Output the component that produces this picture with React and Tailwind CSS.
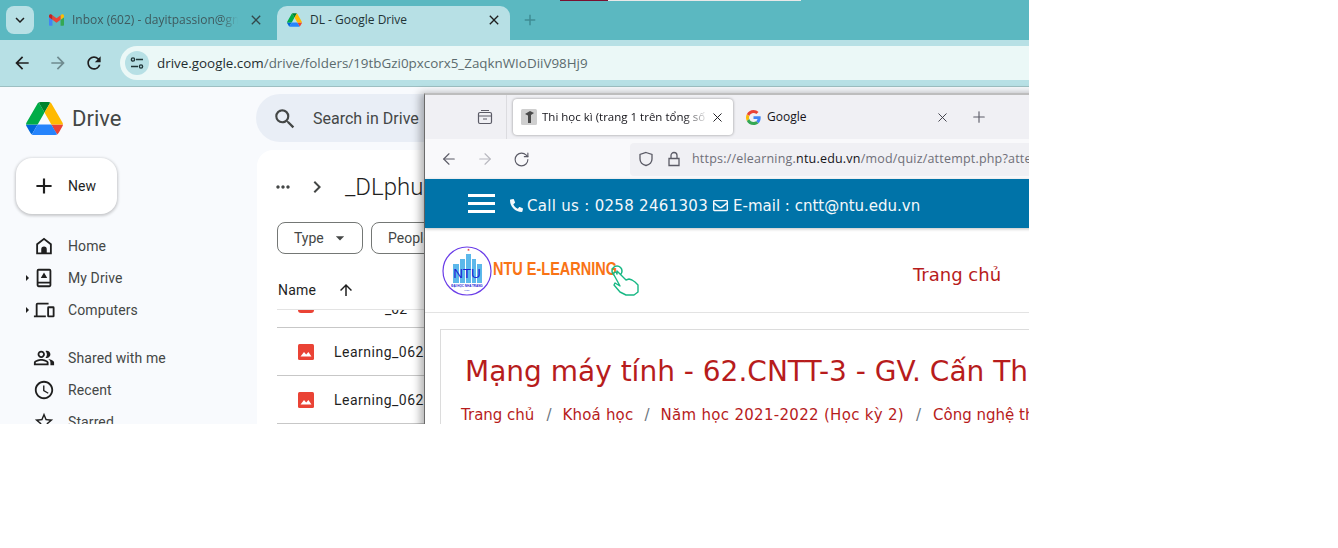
import { MdAdd, MdArrowUpward, MdArrowDropDown, MdChevronRight, MdMoreHoriz, MdOutlinePeopleAlt, MdOutlineAccessTime, MdOutlineStarBorder, MdSearch, MdArrowBack, MdArrowForward, MdRefresh, MdClose, MdExpandMore } from "react-icons/md";
import { FaPhone, FaRegEnvelope } from "react-icons/fa";
import { ArrowLeft, ArrowRight, RotateCw, X, Plus } from "lucide-react";

function DriveLogo({ className }) {
  return (
    <svg viewBox="0 0 87.3 78" className={className}>
      <path d="m6.6 66.85 3.85 6.65c.8 1.4 1.95 2.5 3.3 3.3l13.75-23.8h-27.5c0 1.55.4 3.1 1.2 4.5z" fill="#0066da" />
      <path d="m43.65 25-13.75-23.8c-1.35.8-2.5 1.9-3.3 3.3l-25.4 44a9.06 9.06 0 0 0 -1.2 4.5h27.5z" fill="#00ac47" />
      <path d="m73.55 76.8c1.35-.8 2.5-1.9 3.3-3.3l1.6-2.75 7.65-13.25c.8-1.4 1.2-2.95 1.2-4.5h-27.502l5.852 11.5z" fill="#ea4335" />
      <path d="m43.65 25 13.75-23.8c-1.35-.8-2.9-1.2-4.5-1.2h-18.5c-1.6 0-3.15.45-4.5 1.2z" fill="#00832d" />
      <path d="m59.8 53h-32.3l-13.75 23.8c1.35.8 2.9 1.2 4.5 1.2h50.8c1.6 0 3.15-.45 4.5-1.2z" fill="#2684fc" />
      <path d="m73.4 26.5-12.7-22c-.8-1.4-1.95-2.5-3.3-3.3l-13.75 23.8 16.15 28h27.45c0-1.55-.4-3.1-1.2-4.5z" fill="#ffba00" />
    </svg>
  );
}

function GmailIcon() {
  return (
    <svg viewBox="0 0 24 18" className="w-[15px] h-[12px] shrink-0">
      <path d="M1.6 18H5.5V8.5L0 4.4v12C0 17.3.7 18 1.6 18z" fill="#4285f4" />
      <path d="M18.5 18h3.9c.9 0 1.6-.7 1.6-1.6v-12l-5.5 4.1z" fill="#34a853" />
      <path d="M18.5 1.4v7.1L24 4.4V2.2C24 .2 21.7-1 20.1.2z" fill="#fbbc04" />
      <path d="M5.5 8.5V1.4L12 6.3l6.5-4.9v7.1L12 13.4z" fill="#ea4335" />
      <path d="M0 2.2v2.2l5.5 4.1V1.4L3.9.2C2.3-1 0 .2 0 2.2z" fill="#c5221f" />
    </svg>
  );
}

function GoogleIcon() {
  return (
    <svg viewBox="0 0 48 48" className="w-[15px] h-[15px] shrink-0">
      <path fill="#EA4335" d="M24 9.5c3.5 0 6.7 1.2 9.2 3.6l6.9-6.9C35.9 2.4 30.5 0 24 0 14.6 0 6.5 5.4 2.6 13.2l8 6.2C12.4 13.7 17.7 9.5 24 9.5z" />
      <path fill="#4285F4" d="M46.9 24.5c0-1.6-.1-3.1-.4-4.5H24v9h12.9c-.6 3-2.2 5.5-4.7 7.2l7.7 6c4.5-4.2 7-10.3 7-17.7z" />
      <path fill="#FBBC05" d="M10.5 28.6c-.5-1.4-.8-3-.8-4.6s.3-3.2.8-4.6l-8-6.2C.9 16.5 0 20.1 0 24s.9 7.5 2.6 10.8z" />
      <path fill="#34A853" d="M24 48c6.5 0 11.9-2.1 15.9-5.8l-7.7-6c-2.1 1.4-4.9 2.3-8.1 2.3-6.3 0-11.6-4.2-13.5-9.9l-8 6.2C6.5 42.6 14.6 48 24 48z" />
    </svg>
  );
}

function NavIcon({ d }) {
  return (
    <svg viewBox="0 0 24 24" className="w-[22px] h-[22px] fill-[#1f1f1f]">
      <path d={d} fillRule="evenodd" />
    </svg>
  );
}

function NavItem({ icon, label, arrow }) {
  return (
    <div className="relative flex items-center h-8 pl-[33px] gap-[13px] text-sm tracking-[0.1px] text-[#444746]">
      {arrow && <span className="absolute left-[26px] top-[13px] border-y-[3px] border-y-transparent border-l-[3px] border-l-[#1f1f1f]" />}
      <span className="w-[22px] flex justify-center text-[#1f1f1f]">{icon}</span>
      <span>{label}</span>
    </div>
  );
}

function FileRow({ className = "h-12", children }) {
  return <div className={`flex items-center border-b border-[#c7c7c7] ${className}`}>{children}</div>;
}

function RedImage() {
  return (
    <svg viewBox="0 0 16 16" className="w-4 h-4 ml-[21px] shrink-0">
      <rect width="16" height="16" rx="1.5" fill="#ea4335" />
      <path d="M2.5 12.5 6 8l2.2 2.6L10.4 8l3.1 4.5z" fill="#fff" />
    </svg>
  );
}

function NtuLogo() {
  return (
    <svg viewBox="0 0 200 52" className="w-[200px] h-[52px]">
      <circle cx="25" cy="26" r="24" fill="#fff" stroke="#6a3de8" strokeWidth="1.2" />
      <path d="M11 19h6v19h-6zM18 14h5v24h-5zM24 9h5v29h-5zM30 14h4v24h-4zM35 19h5v19h-5z" fill="#5cb8ea" />
      <path d="M26.5 3.5l1 2.4-2.4-1.4h2.8l-2.4 1.4z" fill="#e02424" />
      <text x="25" y="33" textAnchor="middle" fontSize="13.5" fill="#1c22d4" fontFamily="Liberation Sans, sans-serif">NTU</text>
      <text x="25" y="41.5" textAnchor="middle" fontSize="3" fontWeight="700" fill="#1c22d4" fontFamily="Liberation Sans, sans-serif">ĐẠI HỌC NHA TRANG</text>
      <text x="25" y="46" textAnchor="middle" fontSize="2.4" fill="#1c22d4" fontFamily="Liberation Sans, sans-serif">1959</text>
      <text x="51" y="30" fontSize="19" fontWeight="700" fill="#f97316" textLength="124" lengthAdjust="spacingAndGlyphs" fontFamily="Liberation Sans, sans-serif">NTU E-LEARNING</text>
      <circle cx="175" cy="26" r="5" fill="none" stroke="#17b884" strokeWidth="1.5" />
      <path d="M175 26l9 9 3-1 3 1 3 2 3 3v7l-4 3h-8l-6-3-6-7 1-2 5 3-6-11c-1-3 2-4 3-1z" fill="#fff" stroke="#17b884" strokeWidth="1.4" strokeLinejoin="round" />
    </svg>
  );
}

export default function App() {
  return (
    <div className="relative w-[1029px] h-[424px] overflow-hidden bg-white" style={{ fontFamily: "'Open Sans', sans-serif" }}>
      {/* chrome tabs */}
      <div className="relative h-10 bg-[#5bb8c1] flex items-start pl-[6px] pt-[6px]">
        <span className="absolute left-[560px] top-0 w-12 h-px bg-[#7a1030]" />
        <span className="absolute left-[608px] top-0 w-[193px] h-px bg-[#e8e8e8]" />
        <div className="w-[28px] h-[28px] rounded-lg bg-[#b7e0e5] flex items-center justify-center">
          <MdExpandMore className="w-[18px] h-[18px] text-[#1f1f1f]" />
        </div>
        <div className="w-[243px] h-[28px] flex items-center pl-[15px] gap-2 text-xs text-[#3f5a5e]">
          <GmailIcon />
          <span className="w-[166px] overflow-hidden whitespace-nowrap [mask-image:linear-gradient(to_right,black_90%,transparent)]">Inbox (602) - dayitpassion@gmail.com</span>
          <MdClose className="w-4 h-4 ml-[2px] text-[#33484b]" />
        </div>
        <div className="w-[233px] h-[34px] bg-[#b7e0e5] rounded-t-[10px] flex items-center pl-[10px] gap-2 text-xs text-[#1f3437] pb-[6px]">
          <DriveLogo className="w-[15px] h-[14px]" />
          <span className="w-[168px]">DL - Google Drive</span>
          <MdClose className="w-4 h-4 text-[#1f1f1f]" />
        </div>
        <MdAdd className="w-[18px] h-[18px] mt-[5px] ml-[11px] text-[#3f8c94]" />
      </div>
      {/* chrome toolbar */}
      <div className="h-[47px] bg-[#b7e0e5] flex items-start pt-[6px] pl-3 border-b border-[#9dbfc2]">
        <MdArrowBack className="w-5 h-5 mt-[7px] text-[#1f1f1f]" />
        <MdArrowForward className="w-5 h-5 mt-[7px] ml-4 text-[#6f8b8f]" />
        <MdRefresh className="w-5 h-5 mt-[7px] ml-4 text-[#1f1f1f]" />
        <div className="flex-1 h-[34px] ml-4 bg-[#ebf8f7] rounded-l-[17px] flex items-center pl-[5px] text-[13.4px]">
          <span className="w-6 h-6 rounded-full bg-[#b7e0e5] flex items-center justify-center mr-[8px]">
            <svg viewBox="0 0 14 14" className="w-[14px] h-[14px] fill-none stroke-[#1f3437] stroke-[1.4]">
              <circle cx="3" cy="3.5" r="1.6" />
              <path d="M6 3.5h7M1 10.5h7" />
              <circle cx="11" cy="10.5" r="1.6" />
            </svg>
          </span>
          <span className="text-[#1f2d2f]">drive.google.com</span>
          <span className="text-[#5b6b6e]">/drive/folders/19tbGzi0pxcorx5_ZaqknWIoDiiV98Hj9</span>
        </div>
      </div>
      {/* drive page */}
      <div className="flex h-[337px] bg-[#f8fafd] overflow-hidden" style={{ fontFamily: "Roboto, sans-serif" }}>
        <aside className="w-[257px] shrink-0">
          <div className="flex items-center h-[62px] pl-[26px] gap-[9px]">
            <DriveLogo className="w-[37px] h-[33px]" />
            <span className="text-[22px] text-[#444746]">Drive</span>
          </div>
          <div className="ml-4 mt-[9px] w-[101px] h-14 bg-white rounded-2xl shadow-[0_1px_3px_1px_rgba(0,0,0,0.2)] flex items-center pl-[15px] gap-[11px] text-sm text-[#1f1f1f]">
            <MdAdd className="w-[26px] h-[26px]" />
            <span>New</span>
          </div>
          <div className="mt-4">
            <NavItem label="Home" icon={<NavIcon d="M12 3 3.5 9.5V21h17V9.5L12 3zm0 2.5 6.5 5V19H15v-3.5a3 3 0 0 0-6 0V19H5.5v-8.5L12 5.5z" />} />
            <NavItem arrow label="My Drive" icon={<NavIcon d="M6 2h12a2 2 0 0 1 2 2v16a2 2 0 0 1-2 2H6a2 2 0 0 1-2-2V4a2 2 0 0 1 2-2zm0 2v12h12V4H6zm0 14v2h12v-2H6zm6-12 3.5 6h-7L12 6z" />} />
            <NavItem arrow label="Computers" icon={<NavIcon d="M1 20v-2h2V6a2 2 0 0 1 2-2h12v2H5v12h9v2H1zm16 0a1.5 1.5 0 0 1-1.5-1.5v-9A1.5 1.5 0 0 1 17 8h5a1.5 1.5 0 0 1 1.5 1.5v9A1.5 1.5 0 0 1 22 20h-5zm.5-2h4v-8h-4v8z" />} />
          </div>
          <div className="mt-4">
            <NavItem label="Shared with me" icon={<MdOutlinePeopleAlt className="w-[22px] h-[22px]" />} />
            <NavItem label="Recent" icon={<MdOutlineAccessTime className="w-[22px] h-[22px]" />} />
            <NavItem label="Starred" icon={<MdOutlineStarBorder className="w-[22px] h-[22px]" />} />
          </div>
        </aside>
        <main className="flex-1 min-w-0 pt-[7px]">
          <div className="h-12 -ml-px rounded-l-3xl bg-[#e9eef6] flex items-center pl-[16px] gap-[15px] pt-px text-base text-[#444746]">
            <MdSearch className="w-[26px] h-[26px] text-[#444746]" />
            <span>Search in Drive</span>
          </div>
          <div className="mt-2 h-[300px] bg-white rounded-tl-2xl pl-5 overflow-hidden">
            <div className="flex items-center h-[74px] -ml-[4px]">
              <MdMoreHoriz className="w-[20px] h-[20px] text-[#444746]" />
              <MdChevronRight className="w-6 h-6 ml-3 text-[#444746]" />
              <span className="ml-4 text-2xl font-light text-[#1f1f1f] whitespace-nowrap">_DLphuc</span>
            </div>
            <div className="flex gap-2 h-8 -mt-[2px]">
              <div className="w-[86px] border border-[#747775] rounded-lg flex items-center pl-4 gap-[6px] text-sm text-[#444746]">
                <span>Type</span>
                <MdArrowDropDown className="w-5 h-5" />
              </div>
              <div className="w-[100px] border border-[#747775] rounded-lg flex items-center pl-4 text-sm text-[#444746]">
                <span>People</span>
              </div>
            </div>
            <div className="flex items-center h-[38px] mt-[17px] pl-px text-sm text-[#1f1f1f]">
              <span className="tracking-[0.2px]">Name</span>
              <MdArrowUpward className="w-[18px] h-[18px] ml-[21px]" />
            </div>
            <div className="border-t border-[#e3e3e3]" />
            <FileRow className="h-[18px] overflow-hidden">
              <span className="ml-[21px] w-4 h-[3px] -mt-[15px] bg-[#ea4335] rounded-b-sm" />
              <span className="ml-[71px] -mt-[20px] text-sm text-[#1f1f1f]">_02</span>
            </FileRow>
            <FileRow>
              <RedImage />
              <span className="ml-[20px] text-sm tracking-[0.5px] text-[#1f1f1f] whitespace-nowrap">Learning_062</span>
            </FileRow>
            <FileRow>
              <RedImage />
              <span className="ml-[20px] text-sm tracking-[0.5px] text-[#1f1f1f] whitespace-nowrap">Learning_062</span>
            </FileRow>
          </div>
        </main>
      </div>

      {/* overlapping window */}
      <div className="absolute left-[424px] top-[93px] w-[760px] h-[340px] border-t-2 border-t-[#bdbdbd] border-l border-l-[#6b6b6b] bg-white shadow-[-4px_0_8px_rgba(0,0,0,0.3)]" style={{ fontFamily: "'Open Sans', sans-serif" }}>
        {/* tabs */}
        <div className="h-11 bg-[#f0f0f4] flex items-center">
          <div className="w-[82px] h-full border-r border-[#dcdce0] flex items-center justify-end pr-[13px]">
            <svg viewBox="0 0 16 16" className="w-4 h-4 fill-none stroke-[#5b5b66] stroke-[1.2]">
              <path d="M4 1.5h8M1.5 5a1.5 1.5 0 0 1 1.5-1.5h10A1.5 1.5 0 0 1 14.5 5v8a1.5 1.5 0 0 1-1.5 1.5H3A1.5 1.5 0 0 1 1.5 13V5zM1.5 7h13M6 10h4" />
            </svg>
          </div>
          <div className="ml-[6px] w-[220px] h-9 bg-white rounded shadow-[0_0_3px_rgba(0,0,0,0.4)] flex items-center pl-[8px] text-[11.5px] text-[#15141a]">
            <svg viewBox="0 0 16 16" className="w-4 h-4 shrink-0">
              <rect width="16" height="16" rx="1.5" fill="#cfcfcf" />
              <path d="M4 5 9 2l4 2-3 2v8H7V6.5z" fill="#4a4a4a" />
            </svg>
            <span className="ml-[5px] w-[167px] overflow-hidden whitespace-nowrap [mask-image:linear-gradient(to_right,black_85%,transparent)]">Thi học kì (trang 1 trên tổng số 3)</span>
            <X className="w-[15px] h-[15px] ml-[1px]" strokeWidth={1.5} />
          </div>
          <div className="w-[225px] flex items-center pl-[13px] text-xs text-[#15141a]">
            <GoogleIcon />
            <span className="ml-[6px] w-[168px]">Google</span>
            <X className="w-[15px] h-[15px] text-[#3b3b44]" strokeWidth={1.5} />
          </div>
          <Plus className="w-[18px] h-[18px] ml-3 text-[#5b5b66]" strokeWidth={1.5} />
        </div>
        {/* toolbar */}
        <div className="h-10 bg-[#f9f9fb] flex items-center pl-[15px]">
          <ArrowLeft className="w-[18px] h-[18px] text-[#5b5b66]" strokeWidth={1.5} />
          <ArrowRight className="w-[18px] h-[18px] ml-[18px] text-[#b8b8bf]" strokeWidth={1.5} />
          <RotateCw className="w-[17px] h-[17px] ml-[19px] text-[#5b5b66]" strokeWidth={1.6} />
          <div className="ml-[100px] flex-1 h-[33px] bg-[#f0f0f4] rounded flex items-center pl-[8px] text-[12.5px] text-[#6f6f78]">
            <svg viewBox="0 0 16 16" className="w-4 h-4 shrink-0 fill-none stroke-[#5b5b66] stroke-[1.3]">
              <path d="M8 1.5 14 3.5V8c0 3.2-2.8 5.6-6 6.5C4.8 13.6 2 11.2 2 8V3.5z" />
            </svg>
            <svg viewBox="0 0 16 16" className="w-4 h-4 ml-[12px] shrink-0 fill-none stroke-[#5b5b66] stroke-[1.3]">
              <path d="M3 7.5h10v7H3zM5 7.5V4.5a3 3 0 0 1 6 0v3" />
            </svg>
            <span className="ml-[10px] whitespace-nowrap tracking-[0.2px]">https://elearning.<span className="text-[#15141a]">ntu.edu.vn</span>/mod/quiz/attempt.php?attempt=12345</span>
          </div>
        </div>
        {/* site top bar */}
        <div className="relative h-[49px] bg-[#0073a8] flex items-center pl-[43px] text-[15px] text-[#f4f8fb] shadow-[0_1px_3px_rgba(0,0,0,0.25)]" style={{ fontFamily: "'DejaVu Sans', sans-serif" }}>
          <div className="w-[27px] flex flex-col gap-[5px]">
            <span className="h-[3px] bg-white" />
            <span className="h-[3px] bg-white" />
            <span className="h-[3px] bg-white" />
          </div>
          <FaPhone className="ml-[15px] mt-[3px] w-[13px] h-[13px] -scale-x-100" />
          <span className="ml-[4px] mt-[6px] tracking-[0.3px] whitespace-nowrap">Call us : 0258 2461303</span>
          <FaRegEnvelope className="ml-[5px] mt-[3px] w-[15px] h-[15px]" />
          <span className="ml-[5px] mt-[6px] whitespace-nowrap">E-mail : cntt@ntu.edu.vn</span>
        </div>
        {/* site header */}
        <div className="h-[85px] border-b border-[#e3e3e3] flex items-center pl-[17px] pt-[2px]">
          <NtuLogo />
          <span className="ml-[271px] mt-2 text-lg text-[#b71c1c] whitespace-nowrap" style={{ fontFamily: "'DejaVu Sans', sans-serif" }}>Trang chủ</span>
        </div>
        {/* course card */}
        <div className="mx-[15px] mt-4 border border-[#dcdcdc] pl-[24px] pt-[22px] h-[120px] text-[#b71c1c]" style={{ fontFamily: "'DejaVu Sans', sans-serif" }}>
          <h1 className="text-[28px] leading-10 whitespace-nowrap">Mạng máy tính - 62.CNTT-3 - GV. Cấn Thị Phượng</h1>
          <div className="-ml-[4px] mt-3 flex items-center text-[15px] whitespace-nowrap">
            <span>Trang chủ</span>
            <span className="ml-3 mr-[11px] text-[#6c757d]">/</span>
            <span className="tracking-[0.2px]">Khoá học</span>
            <span className="mx-[11px] text-[#6c757d]">/</span>
            <span className="tracking-[0.3px]">Năm học 2021-2022 (Học kỳ 2)</span>
            <span className="ml-3 mr-[12px] text-[#6c757d]">/</span>
            <span>Công nghệ thông tin</span>
          </div>
        </div>
      </div>
    </div>
  );
}
